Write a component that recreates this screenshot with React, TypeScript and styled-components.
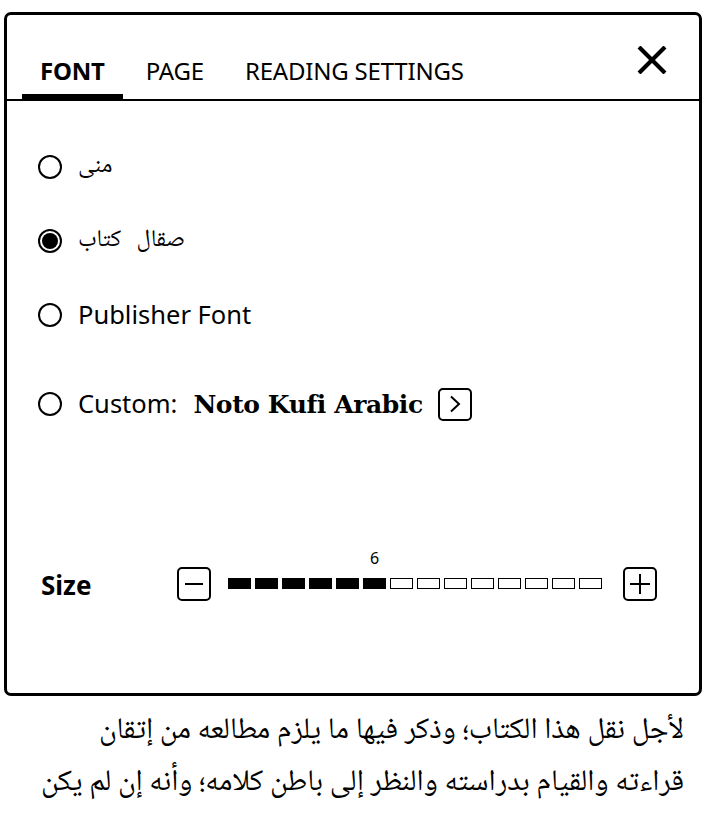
import React from "react";
import styled, { createGlobalStyle } from "styled-components";

const GlobalStyle = createGlobalStyle`
  html, body { margin: 0; padding: 0; background: #fff; }
  body { font-family: "Noto Sans", "DejaVu Sans", sans-serif; color: #000; }
`;

const Page = styled.div`
  width: 709px;
  height: 817px;
  padding: 12px 0 0 4px;
  box-sizing: border-box;
  overflow: hidden;
  background: #fff;
`;

const Panel = styled.div`
  width: 698px;
  height: 684px;
  box-sizing: border-box;
  border: 3px solid #000;
  border-radius: 7px;
  display: flex;
  flex-direction: column;
`;

const Header = styled.div`
  height: 86px;
  box-sizing: border-box;
  border-bottom: 2px solid #000;
  display: flex;
  align-items: flex-end;
  padding-left: 15px;
  position: relative;
`;

const Tabs = styled.div`
  display: flex;
  gap: 5px;
`;

const Tab = styled.div<{ $active?: boolean }>`
  padding: 0 18px;
  height: 84px;
  box-sizing: border-box;
  display: flex;
  align-items: flex-end;
  padding-bottom: ${(p) => (p.$active ? "11px" : "16px")};
  border-bottom: ${(p) => (p.$active ? "5px solid #000" : "0")};
  font-size: 24px;
  font-weight: ${(p) => (p.$active ? 700 : 400)};
  letter-spacing: -0.2px;
  line-height: 1;
  white-space: nowrap;
`;

const CloseButton = styled.div`
  position: absolute;
  right: 32px;
  top: 31px;
  width: 30px;
  height: 28px;
  display: flex;
`;

const Body = styled.div`
  display: flex;
  flex-direction: column;
  padding: 29px 0 0 31px;
`;

const OptionRow = styled.div<{ $offset?: number }>`
  height: 74px;
  margin-top: ${(p) => p.$offset ?? 0}px;
  display: flex;
  align-items: center;
  gap: 16px;
`;

const Radio = styled.div<{ $checked?: boolean }>`
  width: 24px;
  height: 24px;
  box-sizing: border-box;
  border: 2px solid #000;
  border-radius: 50%;
  flex-shrink: 0;
  display: flex;
  align-items: center;
  justify-content: center;
  &::after {
    content: "";
    display: ${(p) => (p.$checked ? "block" : "none")};
    width: 16px;
    height: 16px;
    border-radius: 50%;
    background: #000;
  }
`;

const ArabicLabel = styled.span`
  font-family: "Noto Naskh Arabic", "Amiri", "Scheherazade New", "DejaVu Sans", serif;
  font-size: 24px;
  word-spacing: 10px;
  direction: rtl;
  line-height: 1;
`;

const Label = styled.span`
  font-size: 25.5px;
  line-height: 1;
`;

const CustomName = styled.span`
  font-family: "DejaVu Serif", "Liberation Serif", serif;
  font-weight: 700;
  font-size: 25px;
  letter-spacing: -0.4px;
`;

const IconBox = styled.div`
  width: 34px;
  height: 34px;
  box-sizing: border-box;
  border: 2px solid #000;
  border-radius: 5px;
  display: flex;
  align-items: center;
  justify-content: center;
  flex-shrink: 0;
`;

const ChevronBox = styled(IconBox)`
  margin-left: -1px;
  height: 33px;
`;

const SizeRow = styled.div`
  margin-top: 125px;
  display: flex;
  align-items: center;
  height: 35px;
`;

const SizeLabel = styled.span`
  width: 139px;
  padding-left: 3px;
  box-sizing: border-box;
  font-size: 26px;
  font-weight: 700;
  line-height: 1;
  margin-top: 2px;
`;

const Segments = styled.div`
  display: flex;
  gap: 4px;
  margin: 0 21px 0 17px;
  position: relative;
`;

const Segment = styled.div<{ $filled?: boolean }>`
  width: 23px;
  height: 11px;
  box-sizing: border-box;
  border: 1px solid #000;
  background: ${(p) => (p.$filled ? "#000" : "#fff")};
  position: relative;
`;

const ValueTag = styled.span`
  position: absolute;
  left: 50%;
  bottom: 22px;
  transform: translateX(-50%);
  font-size: 16px;
  line-height: 1;
`;

const BookText = styled.div`
  padding: 10px 25px 0 20px;
  direction: rtl;
  text-align: right;
  font-family: "Noto Naskh Arabic", "Amiri", "Scheherazade New", "DejaVu Sans", serif;
  font-size: 30px;
  line-height: 52px;
`;

const BookLine = styled.div`
  white-space: nowrap;
`;

const fontOptions = [
  { id: "muna", label: "منى", arabic: true, checked: false },
  { id: "kitab", label: "صقال كتاب", arabic: true, checked: true },
  { id: "publisher", label: "Publisher Font", arabic: false, checked: false },
];

const bookLines = [
  "لأجل نقل هذا الكتاب؛ وذكر فيها ما يلزم مطالعه من إتقان",
  "قراءته والقيام بدراسته والنظر إلى باطن كلامه؛ وأنه إن لم يكن",
];

const SIZE = 6;
const STEPS = 14;

export default function App() {
  return (
    <>
      <GlobalStyle />
      <Page>
        <Panel>
          <Header>
            <Tabs>
              <Tab $active>FONT</Tab>
              <Tab>PAGE</Tab>
              <Tab>READING SETTINGS</Tab>
            </Tabs>
            <CloseButton>
              <svg width="30" height="28" viewBox="0 0 30 28">
                <path d="M2 1 L28 27 M28 1 L2 27" stroke="#000" strokeWidth="4.2" fill="none" />
              </svg>
            </CloseButton>
          </Header>
          <Body>
            {fontOptions.map((o) => (
              <OptionRow key={o.id}>
                <Radio $checked={o.checked} />
                {o.arabic ? <ArabicLabel>{o.label}</ArabicLabel> : <Label>{o.label}</Label>}
              </OptionRow>
            ))}
            <OptionRow $offset={15}>
              <Radio />
              <Label>Custom:</Label>
              <CustomName>Noto Kufi Arabic</CustomName>
              <ChevronBox>
                <svg width="12" height="18" viewBox="0 0 12 18">
                  <path d="M2 1.5 L10 9 L2 16.5" stroke="#000" strokeWidth="2" fill="none" />
                </svg>
              </ChevronBox>
            </OptionRow>
            <SizeRow>
              <SizeLabel>Size</SizeLabel>
              <IconBox>
                <svg width="20" height="20" viewBox="0 0 20 20">
                  <path d="M1 10 H19" stroke="#000" strokeWidth="2" />
                </svg>
              </IconBox>
              <Segments>
                {Array.from({ length: STEPS }, (_, i) => (
                  <Segment key={i} $filled={i < SIZE}>
                    {i === SIZE - 1 && <ValueTag>{SIZE}</ValueTag>}
                  </Segment>
                ))}
              </Segments>
              <IconBox>
                <svg width="22" height="22" viewBox="0 0 22 22">
                  <path d="M1 11 H21 M11 1 V21" stroke="#000" strokeWidth="2" />
                </svg>
              </IconBox>
            </SizeRow>
          </Body>
        </Panel>
        <BookText>
          {bookLines.map((l, i) => (
            <BookLine key={i}>{l}</BookLine>
          ))}
        </BookText>
      </Page>
    </>
  );
}
